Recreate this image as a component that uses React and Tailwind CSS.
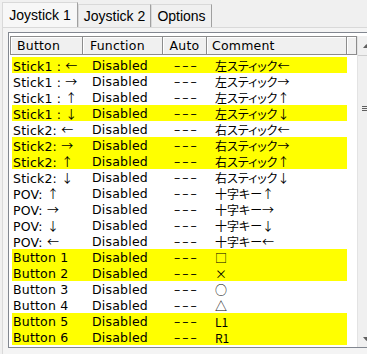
import React from 'react';

// ── Data ───────────────────────────────────────────────────────────────────────
const rows = [
  { label: 'Stick1 : ', arrow: '←', comment: '左スティック←', hl: true },
  { label: 'Stick1 : ', arrow: '→', comment: '左スティック→' },
  { label: 'Stick1 : ', arrow: '↑', comment: '左スティック↑' },
  { label: 'Stick1 : ', arrow: '↓', comment: '左スティック↓', hl: true },
  { label: 'Stick2: ', arrow: '←', comment: '右スティック←' },
  { label: 'Stick2: ', arrow: '→', comment: '右スティック→', hl: true },
  { label: 'Stick2: ', arrow: '↑', comment: '右スティック↑', hl: true },
  { label: 'Stick2: ', arrow: '↓', comment: '右スティック↓' },
  { label: 'POV: ', arrow: '↑', comment: '十字キー↑' },
  { label: 'POV: ', arrow: '→', comment: '十字キー→' },
  { label: 'POV: ', arrow: '↓', comment: '十字キー↓' },
  { label: 'POV: ', arrow: '←', comment: '十字キー←' },
  { label: 'Button 1', comment: '□', hl: true },
  { label: 'Button 2', comment: '×', hl: true },
  { label: 'Button 3', comment: '○' },
  { label: 'Button 4', comment: '△' },
  { label: 'Button 5', comment: 'L1', hl: true },
  { label: 'Button 6', comment: 'R1', hl: true },
];

const tabs = [
  { name: 'Joystick 1', w: 'w-[76px] h-[25px]', active: true },
  { name: 'Joystick 2', w: 'w-[73px] h-[23px]' },
  { name: 'Options', w: 'w-[61px] h-[23px]' },
];

const headCell = 'h-full border-r border-b border-[#8c8c8c] bg-[#f0f0f0] shadow-[inset_1px_1px_0_#ffffff] leading-[18px]';

// ── Main component ─────────────────────────────────────────────────────────────
const App = () => {
  return (
    <div className="w-[367px] h-[354px] overflow-hidden bg-[#f0f0f0] text-black">

      {/* ── Tabs ── */}
      <div className="flex items-end h-[27px] pl-[2px] font-['Liberation_Sans',sans-serif] text-[14px]">
        {tabs.map(t => (
          <div
            key={t.name}
            className={`${t.w} shrink-0 flex justify-center border-l border-t border-[#d9d9d9] border-r-[#a0a0a0] border-r ${t.active ? 'bg-[#f7f7f7] pt-[2px]' : 'bg-[#f0f0f0] pt-[1px]'}`}
          >
            {t.name}
          </div>
        ))}
      </div>

      {/* ── Panel ── */}
      <div className="ml-[2px] h-[327px] border-t border-l border-[#d9d9d9] bg-[#f4f4f4] pt-[4px] pl-[5px]">

        {/* ── List view ── */}
        <div className="flex w-[380px] h-[316px] border border-[#828790] bg-white font-['DejaVu_Sans','Noto_Sans_CJK_JP',sans-serif] text-[12.5px] tracking-[0.2px]">
          <div className="w-[348px] shrink-0 pt-[3px] pl-[1px]">

            {/* Header */}
            <div className="flex h-[19px] border-t border-l border-[#8c8c8c]">
              <div className={`${headCell} w-[72px] pl-[6px]`}>Button</div>
              <div className={`${headCell} w-[80px] pl-[7px]`}>Function</div>
              <div className={`${headCell} w-[44px] text-center`}>Auto</div>
              <div className={`${headCell} w-[140px] pl-[5px]`}>Comment</div>
              <div className={`${headCell} w-[10px]`} />
            </div>

            {/* Rows */}
            <div className="mt-[2px] ml-[2px]">
              {rows.map((r, i) => (
                <div
                  key={i}
                  className={`flex w-[335px] h-[16px] pt-[1px] leading-[15px] whitespace-nowrap ${r.hl ? 'bg-[#ffff00]' : ''}`}
                >
                  <div className="w-[71px] pl-[1px]">
                    {r.label}
                    {r.arrow && (
                      <span className="font-['Noto_Sans_CJK_JP',sans-serif] text-[12px]">{r.arrow}</span>
                    )}
                  </div>
                  <div className="w-[80px] pl-[9px]">Disabled</div>
                  <div className="w-[44px] pl-[11px] tracking-[2px]">–––</div>
                  <div className="w-[140px] pl-[8px] font-['Noto_Sans_CJK_JP',sans-serif] text-[12px] tracking-normal [font-feature-settings:'palt']">
                    {r.comment}
                  </div>
                </div>
              ))}
            </div>
          </div>

          {/* ── Scrollbar ── */}
          <div className="w-[17px] shrink-0 mt-[3px] border-l border-[#e3e3e3] bg-[#f0f0f0] flex flex-col">
            <div className="h-[19px] flex items-center pl-[5px]">
              <svg width="7" height="4" viewBox="0 0 7 4"><path d="M3.5 0 L7 4 L0 4 Z" fill="#606060" /></svg>
            </div>
            <div className="h-[106px] border-t border-[#cdcdcd] flex items-center pl-[4px]">
              <div className="flex flex-col gap-[1px]">
                <div className="w-[7px] h-[1px] bg-[#606060]" />
                <div className="w-[7px] h-[1px] bg-[#606060]" />
                <div className="w-[7px] h-[1px] bg-[#606060]" />
              </div>
            </div>
            <div className="flex-1" />
            <div className="h-[17px] flex items-center pl-[5px]">
              <svg width="7" height="4" viewBox="0 0 7 4"><path d="M0 0 L7 0 L3.5 4 Z" fill="#606060" /></svg>
            </div>
          </div>
        </div>
      </div>
    </div>
  );
};

export default App;
